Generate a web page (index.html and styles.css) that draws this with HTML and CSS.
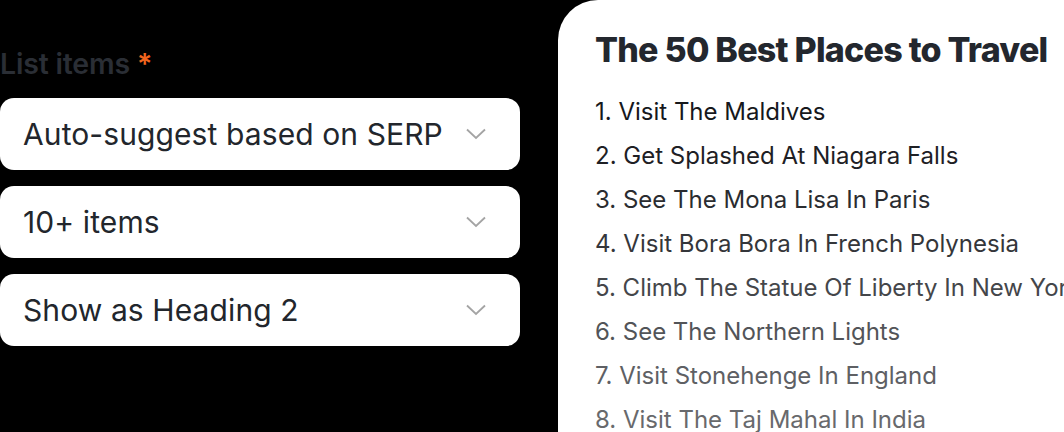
FILE: index.html
```html
<!DOCTYPE html>
<html>
<head>
<meta charset="utf-8">
<link rel="stylesheet" href="styles.css">
</head>
<body>
<div class="page">
  <section class="form">
    <div class="label">List items <span class="req">*</span></div>
    <div class="select"><span>Auto-suggest based on SERP</span><svg class="chev" viewBox="0 0 20 12"><path d="M1 1.5 L10 10 L19 1.5"/></svg></div>
    <div class="select"><span>10+ items</span><svg class="chev" viewBox="0 0 20 12"><path d="M1 1.5 L10 10 L19 1.5"/></svg></div>
    <div class="select"><span>Show as Heading 2</span><svg class="chev" viewBox="0 0 20 12"><path d="M1 1.5 L10 10 L19 1.5"/></svg></div>
  </section>
  <section class="card">
    <h2 class="title">The 50 Best Places to Travel</h2>
    <ol class="list">
      <li class="i1">1. Visit The Maldives</li>
      <li class="i2">2. Get Splashed At Niagara Falls</li>
      <li class="i3">3. See The Mona Lisa In Paris</li>
      <li class="i4">4. Visit Bora Bora In French Polynesia</li>
      <li class="i5">5. Climb The Statue Of Liberty In New York</li>
      <li class="i6">6. See The Northern Lights</li>
      <li class="i7">7. Visit Stonehenge In England</li>
      <li class="i8">8. Visit The Taj Mahal In India</li>
    </ol>
  </section>
</div>
</body>
</html>
```
FILE: styles.css
```css
* { box-sizing: border-box; }
html, body { margin: 0; padding: 0; background: #000; }
body { width: 1064px; height: 432px; overflow: hidden; font-family: Inter, "Noto Sans", sans-serif; }
.page { display: flex; height: 432px; }
.form { width: 558px; padding-top: 46px; display: flex; flex-direction: column; }
.label { font-size: 28.5px; font-weight: 600; color: #2a2e35; line-height: 36px; margin-bottom: 16px; letter-spacing: -0.2px; }
.req { color: #f0641e; }
.select { width: 520px; height: 72px; background: #fff; border-radius: 14px; display: flex; align-items: center; justify-content: space-between; padding: 0 34px 0 23px; margin-bottom: 16px; font-size: 30px; color: #22262c; letter-spacing: 0.1px; }
.chev { width: 20px; height: 12px; fill: none; stroke: #a4a4a4; stroke-width: 1.8; }
.card { flex: 1; background: #fff; border-top-left-radius: 40px; padding: 28px 0 0 37px; white-space: nowrap; overflow: hidden; }
.title { margin: 0 0 18px; font-size: 34px; font-weight: 800; color: #23272e; letter-spacing: -0.75px; line-height: 44px; }
.list { list-style: none; margin: 0; padding: 0; font-size: 24px; }
.list li { line-height: 44px; }
.i1 { color: #16181c; }
.i2 { color: #1e2024; }
.i3 { color: #2a2c30; }
.i4 { color: #34363a; }
.i5 { color: #44464a; }
.i6 { color: #525458; }
.i7 { color: #5e6064; }
.i8 { color: #68696c; }
```
